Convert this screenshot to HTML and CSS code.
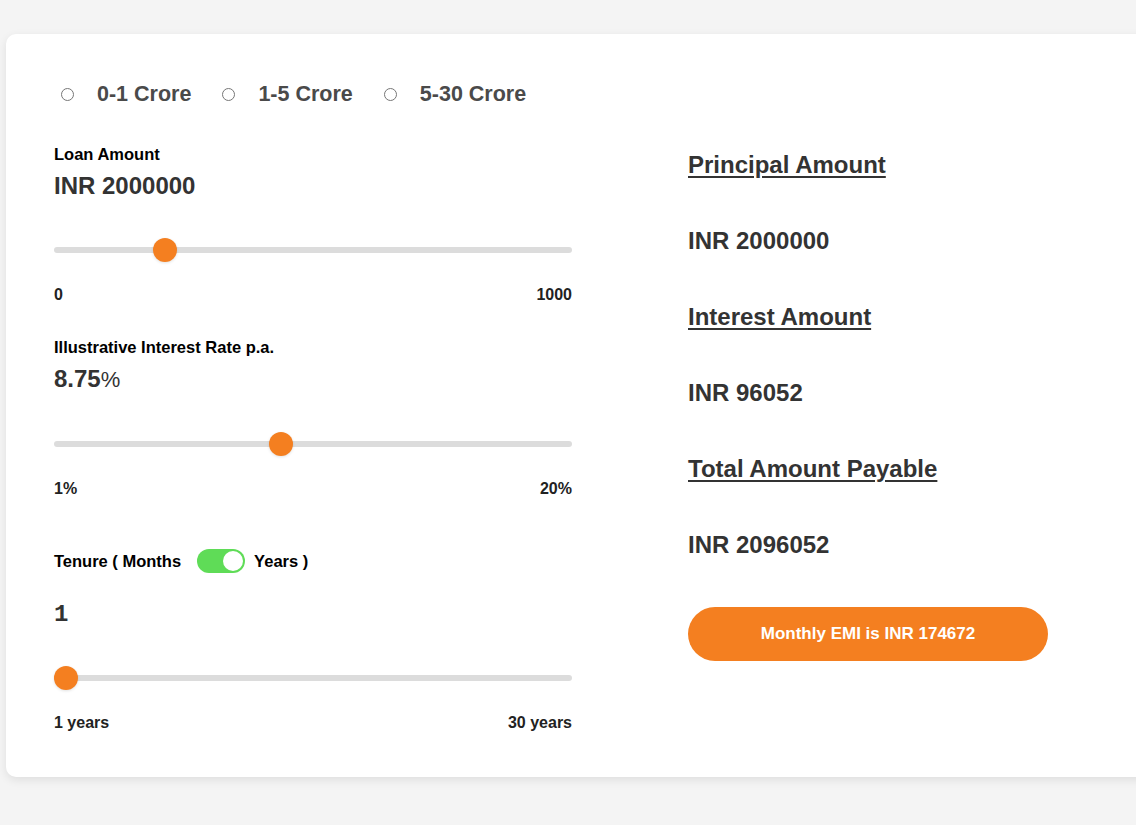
FILE: index.html
```html
<!DOCTYPE html>
<html lang="en">
<head>
<meta charset="utf-8">
<title>EMI Calculator</title>
<link rel="stylesheet" href="styles.css">
</head>
<body>
<div class="page">
  <div class="card">
    <div class="left">
      <div class="ranges">
        <label class="opt"><input type="radio" name="range"><span>0-1 Crore</span></label>
        <label class="opt"><input type="radio" name="range"><span>1-5 Crore</span></label>
        <label class="opt"><input type="radio" name="range"><span>5-30 Crore</span></label>
      </div>

      <div class="field first">
        <div class="label">Loan Amount</div>
        <div class="value">INR 2000000</div>
        <div class="slider"><div class="track"></div><div class="thumb" style="--p:0.2"></div></div>
        <div class="minmax"><span>0</span><span>1000</span></div>
      </div>

      <div class="field">
        <div class="label">Illustrative Interest Rate p.a.</div>
        <div class="value">8.75<span class="pct">%</span></div>
        <div class="slider"><div class="track"></div><div class="thumb" style="--p:0.435"></div></div>
        <div class="minmax"><span>1%</span><span>20%</span></div>
      </div>

      <div class="field tenure">
        <div class="tenure-row">
          <span class="label">Tenure ( Months</span>
          <span class="toggle"><span class="knob"></span></span>
          <span class="label">Years )</span>
        </div>
        <div class="value mono">1</div>
        <div class="slider"><div class="track"></div><div class="thumb" style="--p:0"></div></div>
        <div class="minmax"><span>1 years</span><span>30 years</span></div>
      </div>
    </div>

    <div class="right">
      <div class="r-head">Principal Amount</div>
      <div class="r-val">INR 2000000</div>
      <div class="r-head">Interest Amount</div>
      <div class="r-val">INR 96052</div>
      <div class="r-head">Total Amount Payable</div>
      <div class="r-val">INR 2096052</div>
      <button class="emi">Monthly EMI is INR 174672</button>
    </div>
  </div>
</div>
</body>
</html>
```
FILE: styles.css
```css
html, body {
  margin: 0;
  padding: 0;
  background: #f4f4f4;
  font-family: "Liberation Sans", Arial, Helvetica, sans-serif;
}

.page {
  width: 1136px;
  height: 825px;
  overflow: hidden;
  padding: 34px 0 0 6px;
  box-sizing: border-box;
}

.card {
  width: 1220px;
  background: #fff;
  border-radius: 10px;
  box-shadow: 0 3px 10px rgba(0, 0, 0, 0.09);
  padding: 47px 48px 45px 48px;
  box-sizing: border-box;
  display: flex;
  gap: 116px;
}

.left {
  width: 518px;
  flex: none;
}

.ranges {
  display: flex;
  align-items: center;
  gap: 31px;
  height: 26px;
  padding-left: 7px;
}

.opt {
  display: inline-flex;
  align-items: center;
  gap: 23px;
  font-size: 21.5px;
  font-weight: bold;
  color: #4a4a4a;
  line-height: 26px;
}

.opt input {
  margin: 0;
  width: 13px;
  height: 13px;
}

.field {
  margin-top: 33px;
}

.field.first {
  margin-top: 37px;
}

.field.tenure {
  margin-top: 51px;
}

.label {
  font-size: 16.5px;
  line-height: 20px;
  font-weight: bold;
  color: #000;
}

.value {
  margin-top: 8px;
  font-size: 24px;
  line-height: 28px;
  font-weight: bold;
  color: #333;
}

.value .pct {
  font-weight: normal;
  font-size: 22px;
}

.value.mono {
  font-family: "Liberation Mono", "Courier New", monospace;
  margin-top: 28px;
}

.slider {
  position: relative;
  height: 24px;
  margin-top: 38px;
  display: flex;
  align-items: center;
}

.tenure .slider {
  margin-top: 37px;
}

.track {
  width: 100%;
  height: 6px;
  border-radius: 3px;
  background: #dcdcdc;
}

.thumb {
  position: absolute;
  top: 0;
  left: calc(var(--p) * (100% - 24px));
  width: 24px;
  height: 24px;
  border-radius: 50%;
  background: #f47f20;
  box-shadow: 0 1px 3px rgba(0, 0, 0, 0.12);
}

.minmax {
  margin-top: 24px;
  display: flex;
  justify-content: space-between;
  font-size: 16px;
  line-height: 18px;
  font-weight: bold;
  color: #222;
}

.tenure-row {
  display: flex;
  align-items: center;
  height: 24px;
}

.tenure-row .label {
  line-height: 24px;
}

.toggle {
  margin: 0 9px 0 16px;
  width: 48px;
  height: 24px;
  border-radius: 12px;
  background: #5fdc57;
  display: flex;
  align-items: center;
  justify-content: flex-end;
  padding: 0 2px;
  box-sizing: border-box;
}

.knob {
  width: 20px;
  height: 20px;
  border-radius: 50%;
  background: #fff;
}

.right {
  padding-top: 70px;
  display: flex;
  flex-direction: column;
  align-items: flex-start;
  gap: 48px;
}

.r-head, .r-val {
  font-size: 24px;
  line-height: 28px;
  font-weight: bold;
  color: #333;
}

.r-head {
  text-decoration: underline;
  text-underline-offset: 3px;
}

.emi {
  width: 360px;
  height: 54px;
  border: none;
  border-radius: 27px;
  background: #f47f20;
  color: #fff;
  font-family: "Liberation Sans", Arial, Helvetica, sans-serif;
  font-size: 17px;
  font-weight: bold;
  padding: 0;
}
```
